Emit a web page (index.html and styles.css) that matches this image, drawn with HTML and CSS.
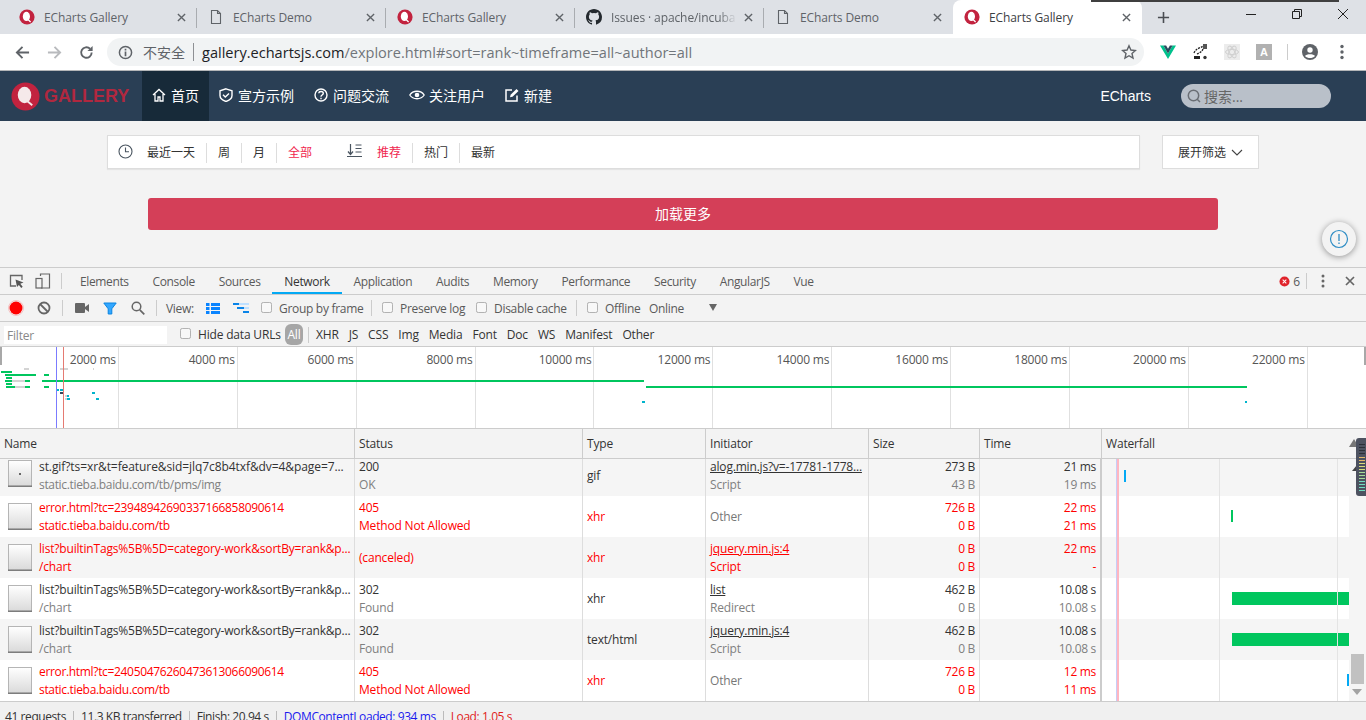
FILE: index.html
```html
<!DOCTYPE html>
<html lang="zh-CN">
<head>
<meta charset="utf-8">
<title>ECharts Gallery</title>
<link rel="stylesheet" href="styles.css">
</head>
<body>
<svg class="defs" width="0" height="0" aria-hidden="true">
  <defs>
    <symbol id="fav" viewBox="0 0 16 16"><circle cx="8" cy="8" r="7.6" fill="#c2233f"/><ellipse cx="7.4" cy="7.4" rx="3.6" ry="4.6" fill="#fff"/><path d="M9 10.5l2.6 2.4" stroke="#fff" stroke-width="1.3"/></symbol>
    <symbol id="doc" viewBox="0 0 16 16"><path d="M3.5 1.5h6l3 3v10h-9z M9.5 1.5v3h3" fill="none" stroke="#5f6368" stroke-width="1.1"/></symbol>
    <symbol id="x" viewBox="0 0 10 10"><path d="M1 1l8 8M9 1l-8 8" stroke="#5f6368" stroke-width="1.5"/></symbol>
    <symbol id="cb" viewBox="0 0 12 12"><rect x=".5" y=".5" width="11" height="11" rx="2" fill="#f8f8f8" stroke="#a9a9a9"/></symbol>
    <symbol id="thumb" viewBox="0 0 24 27"><defs><linearGradient id="tg" x1="0" y1="0" x2="0" y2="1"><stop offset="0" stop-color="#fff"/><stop offset="1" stop-color="#d9d9d9"/></linearGradient></defs><rect x=".5" y=".5" width="23" height="26" fill="url(#tg)" stroke="#b5b5b5"/><path d="M0 26.2h24" stroke="#777" stroke-width="1.4"/></symbol>
  </defs>
</svg>

<header class="tabstrip">
  <div class="tab"><svg class="fav"><use href="#fav"/></svg><span class="tab-title">ECharts Gallery</span><svg class="tab-x"><use href="#x"/></svg></div>
  <div class="tab"><svg class="fav"><use href="#doc"/></svg><span class="tab-title">ECharts Demo</span><svg class="tab-x"><use href="#x"/></svg></div>
  <div class="tab"><svg class="fav"><use href="#fav"/></svg><span class="tab-title">ECharts Gallery</span><svg class="tab-x"><use href="#x"/></svg></div>
  <div class="tab"><svg class="fav" viewBox="0 0 16 16"><path fill="#24292e" d="M8 0C3.58 0 0 3.58 0 8c0 3.54 2.29 6.53 5.47 7.59.4.07.55-.17.55-.38v-1.34c-2.23.48-2.7-1.07-2.7-1.07-.36-.93-.89-1.17-.89-1.17-.73-.5.05-.49.05-.49.8.06 1.23.83 1.23.83.71 1.22 1.87.87 2.33.66.07-.52.28-.87.5-1.07-1.77-.2-3.64-.89-3.64-3.95 0-.87.31-1.59.82-2.15-.08-.2-.36-1.02.08-2.12 0 0 .67-.21 2.2.82a7.6 7.6 0 0 1 4 0c1.53-1.04 2.2-.82 2.2-.82.44 1.1.16 1.92.08 2.12.51.56.82 1.27.82 2.15 0 3.07-1.87 3.75-3.65 3.95.29.25.54.73.54 1.48v2.2c0 .21.15.46.55.38A8 8 0 0 0 16 8c0-4.42-3.58-8-8-8z"/></svg><span class="tab-title tab-fade">Issues · apache/incuba</span><svg class="tab-x"><use href="#x"/></svg></div>
  <div class="tab tab-nosep"><svg class="fav"><use href="#doc"/></svg><span class="tab-title">ECharts Demo</span><svg class="tab-x"><use href="#x"/></svg></div>
  <div class="tab tab-active"><svg class="fav"><use href="#fav"/></svg><span class="tab-title">ECharts Gallery</span><svg class="tab-x"><use href="#x"/></svg></div>
  <svg class="newtab" viewBox="0 0 14 14"><path d="M7 1v12M1 7h12" stroke="#4a4d52" stroke-width="1.7"/></svg>
  <div class="winctl">
    <svg viewBox="0 0 12 12"><path d="M1 6.5h10" stroke="#222" stroke-width="1"/></svg>
    <svg viewBox="0 0 12 12"><path d="M1.5 3.5h7v7h-7zM3.5 3.5v-2h7v7h-2" fill="none" stroke="#222" stroke-width="1"/></svg>
    <svg viewBox="0 0 12 12"><path d="M1 1l10 10M11 1L1 11" stroke="#222" stroke-width="1"/></svg>
  </div>
  <div class="topline"></div>
</header>

<div class="toolbar">
  <svg class="tb-ic" viewBox="0 0 16 16"><path d="M15 8H2.5M8 2L2 8l6 6" fill="none" stroke="#5f6368" stroke-width="2"/></svg>
  <svg class="tb-ic" viewBox="0 0 16 16"><path d="M1 8h12.5M8 2l6 6-6 6" fill="none" stroke="#b8babd" stroke-width="2"/></svg>
  <svg class="tb-ic" viewBox="0 0 16 16"><path d="M13.5 8a5.6 5.6 0 1 1-1.7-4" fill="none" stroke="#5f6368" stroke-width="2"/><path d="M14.5 1v5.5H9z" fill="#5f6368"/></svg>
  <div class="omnibox">
    <svg class="info" viewBox="0 0 16 16"><circle cx="8" cy="8" r="6.5" fill="none" stroke="#5f6368" stroke-width="1.6"/><path d="M8 7v5M8 4v1.8" stroke="#5f6368" stroke-width="1.8"/></svg>
    <span class="insecure">不安全</span><i class="omni-sep"></i>
    <span class="url"><b>gallery.echartsjs.com</b>/explore.html#sort=rank~timeframe=all~author=all</span>
    <svg class="star" viewBox="0 0 16 16"><path d="M8 1.8l1.9 4.2 4.5.5-3.4 3 1 4.5L8 11.7 4 14l1-4.500-3.400-3 4.500-.5z" fill="none" stroke="#5f6368" stroke-width="1.4"/></svg>
  </div>
  <div class="ext">
    <svg viewBox="0 0 16 16"><path d="M0 1.5h3.4L8 9.5l4.6-8H16L8 15z" fill="#00c18c"/><path d="M3.4 1.5h2.7L8 4.8l1.9-3.3h2.7L8 9.5z" fill="#2c4a5e"/></svg>
    <svg viewBox="0 0 16 16"><path d="M2 9c2-5 7-5 9-7M5 10c2-1 5-2 6-5" fill="none" stroke="#222" stroke-width="1.3" stroke-dasharray="2 1"/><rect x="11" y="0" width="4" height="5" fill="#555"/><rect x="2" y="12" width="6" height="3" fill="#222"/><circle cx="13" cy="13.5" r="1.7" fill="#333"/></svg>
    <svg viewBox="0 0 16 16"><rect width="16" height="16" fill="#ececec"/><g fill="none" stroke="#d0d0d0"><ellipse cx="8" cy="8" rx="6.5" ry="2.6"/><ellipse cx="8" cy="8" rx="6.5" ry="2.6" transform="rotate(60 8 8)"/><ellipse cx="8" cy="8" rx="6.5" ry="2.6" transform="rotate(120 8 8)"/></g></svg>
    <span class="ext-a">A</span>
    <i class="ext-sep"></i>
    <svg viewBox="0 0 16 16"><circle cx="8" cy="8" r="8" fill="#5f6368"/><circle cx="8" cy="6" r="2.7" fill="#fff"/><path d="M3 12c1.3-2.4 8.700-2.400 10 0-2.600 2.800-7.400 2.800-10 0z" fill="#fff"/></svg>
    <svg viewBox="0 0 16 16"><circle cx="8" cy="2.500" r="1.700" fill="#5f6368"/><circle cx="8" cy="8" r="1.700" fill="#5f6368"/><circle cx="8" cy="13.500" r="1.700" fill="#5f6368"/></svg>
  </div>
</div>

<nav class="site-nav">
  <div class="logo">
    <svg class="logo-mark" viewBox="0 0 30 30"><circle cx="15" cy="15" r="14.500" fill="#c2233f"/><ellipse cx="14" cy="13.500" rx="7" ry="8.500" fill="#f5e9ea"/><path d="M17 20l5 4" stroke="#f5e9ea" stroke-width="2"/></svg>
    <span class="logo-text">GALLERY</span>
  </div>
  <a class="nav-item nav-active"><svg viewBox="0 0 14 14"><path d="M1 7l6-5.500L13 7M3 6v7h3V9h2v4h3V6" fill="none" stroke="#fff" stroke-width="1.300"/></svg>首页</a>
  <a class="nav-item"><svg viewBox="0 0 14 14"><path d="M7 .800l6 2v4.700c0 3-3 5-6 6-3-1-6-3-6-6V2.800z" fill="none" stroke="#fff" stroke-width="1.400"/><path d="M4 6.800l2.300 2.300L10 5.500" fill="none" stroke="#fff" stroke-width="1.400"/></svg>宣方示例</a>
  <a class="nav-item"><svg viewBox="0 0 14 14"><circle cx="7" cy="7" r="6" fill="none" stroke="#fff" stroke-width="1.400"/><path d="M4.800 5.300C5 2.800 9.300 2.900 9.300 5.300c0 1.700-2.300 1.700-2.300 3.400M7 9.800v1.500" fill="none" stroke="#fff" stroke-width="1.400"/></svg>问题交流</a>
  <a class="nav-item nav-eye"><svg viewBox="0 0 16 12"><path d="M.800 6C4 1 12 1 15.200 6 12 11 4 11 .800 6z" fill="none" stroke="#fff" stroke-width="1.300"/><circle cx="8" cy="6" r="2.300" fill="#fff"/></svg>关注用户</a>
  <a class="nav-item"><svg viewBox="0 0 14 14"><path d="M12 7.500V13H1V2h6" fill="none" stroke="#fff" stroke-width="1.500"/><path d="M5 9.300l.600-2.500L11.500 1 13.500 3 7.500 8.800z" fill="#fff"/></svg>新建</a>
  <a class="nav-brand">ECharts</a>
  <div class="nav-search"><svg viewBox="0 0 14 14"><circle cx="6.500" cy="6.500" r="5.200" fill="none" stroke="#6b6f75" stroke-width="1.500"/><path d="M10 10l3 3" stroke="#6b6f75" stroke-width="1.500"/></svg><span>搜索...</span></div>
</nav>

<main class="page">
  <div class="filters">
    <div class="filter-box">
      <svg class="filter-ic clock" viewBox="0 0 15 15"><circle cx="7.500" cy="7.500" r="6.500" fill="none" stroke="#4a5560" stroke-width="1.100"/><path d="M7.500 3.500v4.300h3.500" fill="none" stroke="#4a5560" stroke-width="1.100"/></svg>
      <span class="f-item f-first">最近一天</span><span class="f-item">周</span><span class="f-item">月</span><span class="f-item f-on f-last">全部</span>
      <svg class="filter-ic sort" viewBox="0 0 15 15"><path d="M3.500 1v10M1 8.500l2.500 3 2.500-3" fill="none" stroke="#4a5560" stroke-width="1.200"/><path d="M8.500 2h6M8.500 5.500h6M8.500 9h6M0 13.500h15" stroke="#4a5560" stroke-width="1"/></svg>
      <span class="f-item f-on f-first">推荐</span><span class="f-item">热门</span><span class="f-item f-last">最新</span>
    </div>
    <button class="expand">展开筛选<svg viewBox="0 0 12 7"><path d="M1 1l5 5 5-5" fill="none" stroke="#444" stroke-width="1.100"/></svg></button>
  </div>
  <button class="load-more">加载更多</button>
  <div class="help"><svg viewBox="0 0 20 20"><circle cx="10" cy="10" r="8.500" fill="none" stroke="#2d8cc4" stroke-width="1.200"/><path d="M10 5v7M10 13.500v1.500" stroke="#2d8cc4" stroke-width="1.300"/></svg></div>
</main>

<section class="devtools">
  <div class="dt-tabs">
    <svg class="dt-ic" viewBox="0 0 16 16"><path d="M7 13H1.500V2.500H13V7" fill="none" stroke="#666" stroke-width="1.300"/><path d="M6.500 6.500l8 3-3.200 1.300 2.400 3-1.500 1.200-2.300-3L8 14z" fill="#555"/></svg>
    <svg class="dt-ic" viewBox="0 0 16 16"><path d="M5.500 3V1h9v14H6" fill="none" stroke="#666" stroke-width="1.200"/><rect x="1" y="5.500" width="6" height="9.500" fill="none" stroke="#666" stroke-width="1.200"/></svg>
    <i class="dt-sep"></i>
    <span class="dt-tab">Elements</span><span class="dt-tab">Console</span><span class="dt-tab">Sources</span><span class="dt-tab dt-tab-on">Network</span><span class="dt-tab">Application</span><span class="dt-tab">Audits</span><span class="dt-tab">Memory</span><span class="dt-tab">Performance</span><span class="dt-tab">Security</span><span class="dt-tab">AngularJS</span><span class="dt-tab">Vue</span>
    <div class="dt-right">
      <svg class="err" viewBox="0 0 12 12"><circle cx="6" cy="6" r="5.500" fill="#e0232b"/><path d="M4 4l4 4M8 4L4 8" stroke="#fff" stroke-width="1.100"/></svg><span class="err-n">6</span><i class="dt-sep err-sep"></i>
      <svg class="dt-dots" viewBox="0 0 4 14"><circle cx="2" cy="2" r="1.500" fill="#666"/><circle cx="2" cy="7" r="1.500" fill="#666"/><circle cx="2" cy="12" r="1.500" fill="#666"/></svg>
      <svg class="dt-close" viewBox="0 0 10 10"><path d="M1 1l8 8M9 1l-8 8" stroke="#666" stroke-width="1.700"/></svg>
    </div>
  </div>

  <div class="dt-bar">
    <svg class="b-rec" viewBox="0 0 16 16"><circle cx="8" cy="8" r="6.500" fill="#f00"/><circle cx="8" cy="8" r="7.500" fill="none" stroke="#f00" stroke-opacity=".2"/></svg>
    <svg class="b-clear" viewBox="0 0 14 14"><circle cx="7" cy="7" r="5.500" fill="none" stroke="#666" stroke-width="1.800"/><path d="M3 3l8 8" stroke="#666" stroke-width="1.800"/></svg>
    <i class="dt-sep b-s1"></i>
    <svg class="b-cam" viewBox="0 0 14 10"><rect y="0" width="10" height="10" rx="1" fill="#666"/><path d="M10 4l4-3v8l-4-3z" fill="#666"/></svg>
    <svg class="b-fil" viewBox="0 0 14 13"><path d="M.800 1h12.400L8.800 6.800V12H5.200V6.800z" fill="#33a7ff" stroke="#0a84e0"/></svg>
    <svg class="b-sea" viewBox="0 0 14 14"><circle cx="5.500" cy="5.500" r="4.300" fill="none" stroke="#666" stroke-width="1.500"/><path d="M8.800 8.800l4.500 4.500" stroke="#666" stroke-width="1.700"/></svg>
    <i class="dt-sep b-s2"></i>
    <span class="b-view">View:</span>
    <svg class="b-v1" viewBox="0 0 14 11"><path d="M0 0h3.500v3H0zM0 4h3.500v3H0zM0 8h3.500v3H0zM5 0h9v3H5zM5 4h9v3H5zM5 8h9v3H5z" fill="#0a84ff"/></svg>
    <svg class="b-v2" viewBox="0 0 16 11"><path d="M0 0h6v2H0zM4 4h7v2H4zM10 8h6v2h-6z" fill="#0a84e8"/><path d="M6 0h10v2H6zM11 4h5v2h-5z" fill="#bfe0ff"/></svg>
    <label class="chk chk-a"><svg><use href="#cb"/></svg>Group by frame</label>
    <i class="dt-sep b-s3"></i>
    <label class="chk chk-b"><svg><use href="#cb"/></svg>Preserve log</label>
    <label class="chk chk-c"><svg><use href="#cb"/></svg>Disable cache</label>
    <i class="dt-sep b-s4"></i>
    <label class="chk chk-d"><svg><use href="#cb"/></svg>Offline</label>
    <span class="b-online">Online</span>
    <svg class="b-arrow" viewBox="0 0 8 7"><path d="M0 0h8L4 7z" fill="#666"/></svg>
  </div>

  <div class="dt-filter">
    <div class="filter-input">Filter</div>
    <label class="chk chk-h"><svg><use href="#cb"/></svg>Hide data URLs</label>
    <span class="pill">All</span>
    <i class="dt-sep p-sep"></i>
    <span class="ft ft-1">XHR</span><span class="ft">JS</span><span class="ft">CSS</span><span class="ft">Img</span><span class="ft">Media</span><span class="ft">Font</span><span class="ft">Doc</span><span class="ft">WS</span><span class="ft">Manifest</span><span class="ft">Other</span>
  </div>

  <div class="overview">
    <div class="ov-cell">2000 ms</div><div class="ov-cell">4000 ms</div><div class="ov-cell">6000 ms</div><div class="ov-cell">8000 ms</div><div class="ov-cell">10000 ms</div><div class="ov-cell">12000 ms</div><div class="ov-cell">14000 ms</div><div class="ov-cell">16000 ms</div><div class="ov-cell">18000 ms</div><div class="ov-cell">20000 ms</div><div class="ov-cell">22000 ms</div><div class="ov-cell ov-end"></div>
    <svg class="ov-chart" width="1366" height="81" viewBox="0 347 1366 81">
      <rect x="0" y="347" width="2" height="18" fill="#a8a8a8"/><rect x="1364" y="347" width="2" height="18" fill="#a8a8a8"/>
      <g fill="#d4d4d4"><rect x="24" y="368" width="5" height="2"/><rect x="60" y="368" width="8" height="2"/><rect x="93" y="368" width="1" height="2"/><rect x="27" y="374" width="9" height="2" fill="#00c65e"/><rect x="12" y="380" width="13" height="2"/><rect x="15" y="386" width="10" height="2"/><rect x="65" y="395" width="2" height="2"/><rect x="65" y="398" width="2" height="2"/></g>
      <g fill="#00c65e"><rect x="1" y="371" width="11" height="2"/><rect x="5" y="374" width="22" height="2"/><rect x="44" y="374" width="5" height="2"/><rect x="6" y="377" width="6" height="2"/><rect x="5" y="380" width="7" height="2"/><rect x="25" y="380" width="5" height="2"/><rect x="6" y="383" width="6" height="2"/><rect x="6" y="386" width="9" height="2"/><rect x="25" y="386" width="5" height="2"/><rect x="44" y="386" width="5" height="2"/><rect x="42" y="380" width="602" height="2"/><rect x="646" y="386" width="601" height="2"/></g>
      <g fill="#00b4cc"><rect x="57" y="389" width="2" height="2"/><rect x="60" y="389" width="3" height="2"/><rect x="92" y="392" width="3" height="2"/><rect x="67" y="395" width="2" height="2"/><rect x="67" y="398" width="3" height="2"/><rect x="96" y="398" width="3" height="2"/><rect x="642" y="401" width="3" height="2"/><rect x="1245" y="401" width="2" height="2"/></g>
      <rect x="60" y="392" width="3" height="2" fill="#34495e"/>
      <rect x="56" y="347" width="1" height="81" fill="#7b7bff"/><rect x="63" y="347" width="1" height="81" fill="#e57a72"/>
    </svg>
  </div>

  <div class="net-head">
    <div class="nh">Name</div><div class="nh">Status</div><div class="nh">Type</div><div class="nh">Initiator</div><div class="nh">Size</div><div class="nh">Time</div><div class="nh nh-w">Waterfall<svg class="sort-up" viewBox="0 0 10 8"><path d="M0 8L5 0l5 8z" fill="#777"/></svg></div>
  </div>

  <div class="net-body">
    <div class="row row-first">
      <div class="c c-name"><svg class="thumb"><use href="#thumb"/></svg><i class="thumb-dot"></i><div class="two"><span class="wide">st.gif?ts=xr&amp;t=feature&amp;sid=jlq7c8b4txf&amp;dv=4&amp;page=7...</span><span class="sub tight">static.tieba.baidu.com/tb/pms/img</span></div></div>
      <div class="c two"><span>200</span><span class="sub">OK</span></div>
      <div class="c mid">gif</div>
      <div class="c two"><span><u>alog.min.js?v=-17781-1778...</u></span><span class="sub">Script</span></div>
      <div class="c two num"><span>273 B</span><span class="sub">43 B</span></div>
      <div class="c two num c-time"><span>21 ms</span><span class="sub">19 ms</span></div>
      <div class="c wf"><i class="tick" style="left:22px;top:11px;background:#03a9f4"></i></div>
    </div>
    <div class="row row-odd row-err">
      <div class="c c-name"><svg class="thumb"><use href="#thumb"/></svg><div class="two"><span class="tight">error.html?tc=23948942690337166858090614</span><span class="tight">static.tieba.baidu.com/tb</span></div></div>
      <div class="c two"><span>405</span><span>Method Not Allowed</span></div>
      <div class="c mid">xhr</div>
      <div class="c mid sub-only">Other</div>
      <div class="c two num"><span>726 B</span><span>0 B</span></div>
      <div class="c two num c-time"><span>22 ms</span><span>21 ms</span></div>
      <div class="c wf"><i class="tick" style="left:129px;top:14px;background:#00c65e"></i></div>
    </div>
    <div class="row row-err">
      <div class="c c-name"><svg class="thumb"><use href="#thumb"/></svg><div class="two"><span>list?builtinTags%5B%5D=category-work&amp;sortBy=rank&amp;p...</span><span>/chart</span></div></div>
      <div class="c mid">(canceled)</div>
      <div class="c mid">xhr</div>
      <div class="c two"><span><u>jquery.min.js:4</u></span><span>Script</span></div>
      <div class="c two num"><span>0 B</span><span>0 B</span></div>
      <div class="c two num c-time"><span>22 ms</span><span>-</span></div>
      <div class="c wf"></div>
    </div>
    <div class="row row-odd">
      <div class="c c-name"><svg class="thumb"><use href="#thumb"/></svg><div class="two"><span>list?builtinTags%5B%5D=category-work&amp;sortBy=rank&amp;p...</span><span class="sub">/chart</span></div></div>
      <div class="c two"><span>302</span><span class="sub">Found</span></div>
      <div class="c mid">xhr</div>
      <div class="c two"><span><u>list</u></span><span class="sub">Redirect</span></div>
      <div class="c two num"><span>462 B</span><span class="sub">0 B</span></div>
      <div class="c two num c-time"><span>10.08 s</span><span class="sub">10.08 s</span></div>
      <div class="c wf"><i class="bar"></i></div>
    </div>
    <div class="row">
      <div class="c c-name"><svg class="thumb"><use href="#thumb"/></svg><div class="two"><span>list?builtinTags%5B%5D=category-work&amp;sortBy=rank&amp;p...</span><span class="sub">/chart</span></div></div>
      <div class="c two"><span>302</span><span class="sub">Found</span></div>
      <div class="c mid">text/html</div>
      <div class="c two"><span><u>jquery.min.js:4</u></span><span class="sub">Script</span></div>
      <div class="c two num"><span>462 B</span><span class="sub">0 B</span></div>
      <div class="c two num c-time"><span>10.08 s</span><span class="sub">10.08 s</span></div>
      <div class="c wf"><i class="bar"></i></div>
    </div>
    <div class="row row-odd row-err">
      <div class="c c-name"><svg class="thumb"><use href="#thumb"/></svg><div class="two"><span class="tight">error.html?tc=24050476260473613066090614</span><span class="tight">static.tieba.baidu.com/tb</span></div></div>
      <div class="c two"><span>405</span><span>Method Not Allowed</span></div>
      <div class="c mid">xhr</div>
      <div class="c mid sub-only">Other</div>
      <div class="c two num"><span>726 B</span><span>0 B</span></div>
      <div class="c two num c-time"><span>12 ms</span><span>11 ms</span></div>
      <div class="c wf"><i class="tick" style="left:245px;top:14px;background:#03a9f4"></i></div>
    </div>
    <div class="wf-lines"><i class="wl wl-blue"></i><i class="wl wl-red"></i><i class="wl wl-g1"></i><i class="wl wl-g2"></i></div>
    <div class="scrollbar"><svg class="sb-up" viewBox="0 0 10 6"><path d="M0 6h10L5 0z" fill="#444"/></svg><i class="thumb-bar"></i><svg class="sb-down" viewBox="0 0 10 6"><path d="M0 0h10L5 6z" fill="#a3a3a3"/></svg></div>
  </div>

  <div class="status"><span>41 requests</span><i></i><span>11.3 KB transferred</span><i></i><span>Finish: 20.94 s</span><i></i><span class="s-blue">DOMContentLoaded: 934 ms</span><i></i><span class="s-red">Load: 1.05 s</span></div>

  <svg class="meter" viewBox="0 0 10 58">
    <path d="M3 0h7v58H3a3 3 0 0 1-3-3V3a3 3 0 0 1 3-3z" fill="#4d5260"/>
    <g fill="#2c3038"><rect x="3" y="6" width="6" height="1"/><rect x="3" y="9" width="6" height="1"/><rect x="3" y="12" width="6" height="1"/><rect x="3" y="15" width="6" height="1"/></g>
    <g fill="#e3b868"><rect x="3" y="19" width="6" height="1"/><rect x="3" y="22" width="6" height="1"/></g>
    <g fill="#d8dc7c"><rect x="3" y="25" width="6" height="1"/><rect x="3" y="28" width="6" height="1"/><rect x="3" y="31" width="6" height="1"/></g>
    <g fill="#a6dc98"><rect x="3" y="34" width="6" height="1"/><rect x="3" y="37" width="6" height="1"/><rect x="3" y="40" width="6" height="1"/></g>
    <g fill="#70dcc0"><rect x="3" y="43" width="6" height="1"/><rect x="3" y="46" width="6" height="1"/><rect x="3" y="49" width="6" height="1"/><rect x="3" y="52" width="6" height="1"/></g>
  </svg>
</section>
</body>
</html>
```
FILE: styles.css
```css
* { box-sizing: border-box; }
html, body { margin: 0; height: 720px; overflow: hidden; }
body { position: relative; width: 1366px; background: #f3f3f3; font-family: "Open Sans", "Noto Sans CJK SC", sans-serif; color: #333; }
.defs { position: absolute; }
i { display: block; font-style: normal; }

/* browser tab strip */
.tabstrip { height: 34px; background: #dee1e6; display: flex; padding-left: 8px; position: relative; }
.tab { width: 189px; height: 34px; display: flex; align-items: center; padding-left: 11px; position: relative; font-size: 12px; color: #5f6368; }
.tab::after { content: ""; position: absolute; right: 0; top: 8px; height: 20px; width: 1px; background: #a9acb0; }
.tab-nosep::after { display: none; }
.tab-active { background: #fff; color: #3c4043; border-radius: 8px 8px 0 0; }
.tab-active::after { display: none; }
.fav { width: 16px; height: 16px; flex: none; }
.tab-title { margin-left: 9px; width: 126px; white-space: nowrap; letter-spacing: -.1px; }
.tab-fade { mask-image: linear-gradient(90deg, #000 85%, transparent); -webkit-mask-image: linear-gradient(90deg, #000 85%, transparent); }
.tab-x { width: 9px; height: 9px; margin-left: 7px; flex: none; }
.newtab { width: 13px; height: 13px; margin: 11px 0 0 15px; }
.winctl { position: absolute; right: 17px; top: 8px; display: flex; gap: 34px; }
.winctl svg { width: 12px; height: 12px; }
.topline { position: absolute; left: 1091px; top: 0; width: 248px; height: 2px; background: #3f3f3f; }

/* address bar */
.toolbar { height: 37px; background: #fff; border-bottom: 1px solid #b4b6b8; display: flex; align-items: center; padding-left: 15px; }
.tb-ic { width: 15px; height: 15px; margin-right: 17px; flex: none; }
.omnibox { width: 1038px; height: 28px; margin-left: -4px; border-radius: 14px; background: #f1f3f4; display: flex; align-items: center; padding-left: 11px; font-size: 14.55px; }
.info { width: 15px; height: 15px; }
.insecure { margin-left: 10px; color: #5f6368; font-size: 14px; }
.omni-sep { width: 1px; height: 18px; background: #8e9094; margin: 0 8px; }
.url { color: #70757a; flex: 1; white-space: nowrap; padding-bottom: 1px; }
.url b { font-weight: 400; color: #202124; }
.star { width: 16px; height: 16px; margin-right: 7px; }
.ext { display: flex; align-items: center; margin-left: 16px; }
.ext svg { width: 16px; height: 16px; margin-right: 16px; flex: none; }
.ext-a { width: 16px; height: 16px; background: #b1b1b1; color: #fff; font: bold 11px/16px "Liberation Sans", sans-serif; text-align: center; }
.ext-sep { width: 1px; height: 16px; background: #ccc; margin: 0 14px 0 15px; }

/* site navigation */
.site-nav { height: 50px; background: #2a3f55; display: flex; align-items: stretch; color: #fff; font-size: 14px; }
.logo { width: 142px; display: flex; align-items: center; padding-left: 11px; }
.logo-mark { width: 29px; height: 29px; flex: none; }
.logo-text { margin-left: 4px; font: bold 18px/1 "Liberation Sans", sans-serif; color: #b0283f; letter-spacing: 0; }
.nav-item { display: flex; align-items: center; padding: 0 10px 2px; gap: 5px; white-space: nowrap; }
.nav-item svg { width: 14px; height: 14px; flex: none; }
.nav-eye { gap: 4px; }
.nav-eye svg { width: 16px; height: 12px; }
.nav-active { background: #172a39; width: 67px; }
.nav-brand { margin-left: auto; align-self: center; font-family: "Liberation Sans", sans-serif; font-size: 14px; }
.nav-search { width: 150px; height: 24px; align-self: center; margin: 0 35px 0 30px; border-radius: 12px; background: #b9c0c9; color: #666; display: flex; align-items: center; padding-left: 6px; gap: 3px; }
.nav-search svg { width: 14px; height: 14px; }

/* page */
.page { height: 146px; padding-top: 14px; position: relative; }
.filters { display: flex; padding-left: 107px; }
.filter-box { width: 1033px; height: 34px; background: #fff; border: 1px solid #ddd; box-shadow: 0 1px 1px rgba(0,0,0,.06); display: flex; align-items: center; padding: 1px 0 0 10px; font-size: 12px; }
.filter-ic { width: 15px; height: 15px; flex: none; }
.clock { margin-top: -3px; }
.sort { margin: -4px 0 0 24px; }
.f-item { padding: 0 11px; border-right: 1px solid #ddd; line-height: 20px; white-space: nowrap; color: #333; }
.f-last { border-right: 0; }
.clock + .f-first { margin-left: 3px; }
.f-on { color: #f0274f; }
.sort + .f-first { margin-left: 4px; }
.expand { width: 97px; height: 34px; margin-left: 22px; background: #fff; border: 1px solid #ddd; color: #333; font: 12px "Open Sans", "Noto Sans CJK SC", sans-serif; display: flex; align-items: center; justify-content: center; gap: 5px; padding: 0; }
.expand svg { width: 12px; height: 7px; }
.load-more { display: block; width: 1070px; height: 32px; margin: 29px 0 0 148px; border: 0; border-radius: 3px; background: #d43f58; color: #fff; font: 14px "Open Sans", "Noto Sans CJK SC", sans-serif; padding: 0 0 2px; }
.help { position: absolute; left: 1322px; top: 101px; width: 34px; height: 34px; border-radius: 50%; background: #f3f3f3; box-shadow: 0 1px 6px rgba(0,0,0,.4); display: flex; align-items: center; justify-content: center; }
.help svg { width: 20px; height: 20px; }

/* devtools */
.devtools { position: relative; height: 453px; background: #f3f3f3; border-top: 1px solid #ccc; font-size: 12px; letter-spacing: -.18px; }
.dt-sep { width: 1px; height: 16px; background: #ccc; flex: none; }
.dt-tabs { height: 27px; display: flex; align-items: center; border-bottom: 1px solid #ccc; padding-left: 9px; position: relative; color: #5a5a5a; }
.dt-ic { width: 16px; height: 16px; margin-right: 10px; flex: none; }
.dt-tab { padding: 0 11.9px; height: 26px; line-height: 28px; white-space: nowrap; letter-spacing: -.35px; }
.dt-tabs .dt-sep + .dt-tab { margin-left: 6px; }
.dt-tab-on { color: #333; box-shadow: inset 0 -2px 0 #03a9f4; }
.dt-right { margin-left: auto; display: flex; align-items: center; padding-right: 11px; }
.err { width: 11px; height: 11px; margin-right: 3px; }
.err-sep { margin: 0 14px 0 6px; }
.err-n { color: #5a5a5a; }
.dt-dots { width: 4px; height: 14px; margin-right: 20px; }
.dt-close { width: 10px; height: 10px; }

.dt-bar { height: 27px; display: flex; align-items: center; border-bottom: 1px solid #ccc; padding-left: 8px; color: #5a5a5a; letter-spacing: -.3px; }
.dt-bar svg { flex: none; }
.b-rec { width: 16px; height: 16px; }
.b-clear { width: 14px; height: 14px; margin-left: 13px; }
.b-s1 { margin-left: 11px; }
.b-cam { width: 14px; height: 10px; margin-left: 12px; }
.b-fil { width: 14px; height: 13px; margin-left: 14px; }
.b-sea { width: 14px; height: 14px; margin-left: 14px; }
.b-s2 { margin-left: 11px; }
.b-view { margin-left: 9px; width: 32px; }
.b-v1 { width: 14px; height: 11px; margin-left: 8px; }
.b-v2 { width: 16px; height: 11px; margin-left: 13px; }
.chk { display: flex; align-items: center; white-space: nowrap; }
.chk svg { width: 11px; height: 11px; margin-right: 7px; flex: none; margin-top: -2px; }
.chk-a { margin-left: 12px; width: 101px; }
.b-s3 { margin-left: 9px; }
.chk-b { margin-left: 10px; width: 83px; }
.chk-c { margin-left: 11px; width: 91px; }
.b-s4 { margin-left: 9px; }
.chk-d { margin-left: 10px; width: 53px; }
.b-online { margin-left: 9px; width: 60px; }
.b-arrow { width: 8px; height: 7px; margin-top: -2px; }

.dt-filter { height: 25px; display: flex; align-items: center; border-bottom: 1px solid #ccc; padding: 1px 0 0 4px; color: #333; }
.filter-input { width: 163px; height: 18px; background: #fff; color: #888; padding-left: 3px; line-height: 19px; }
.chk-h { margin-left: 13px; width: 105px; }
.pill { width: 18px; height: 21px; border-radius: 6px; background: #a6a6a6; color: #fff; text-align: center; line-height: 21px; flex: none; }
.p-sep { margin-left: 5px; height: 16px; }
.ft { margin-left: 10px; white-space: nowrap; }
.ft-1 { margin-left: 7px; }

.overview { height: 82px; background: #fff; border-bottom: 1px solid #ccc; display: grid; grid-template-columns: repeat(11, 118.9px) 1fr; position: relative; color: #555; }
.ov-cell { border-right: 1px solid #e0e0e0; text-align: right; padding: 4px 2px 0 0; line-height: 18px; }
.ov-end { border-right: 0; }
.ov-chart { position: absolute; left: 0; top: 0; }

.net-head, .row { display: grid; grid-template-columns: 355px 228px 123px 163px 111px 122px 247px; }
.net-head { height: 30px; border-bottom: 1px solid #ccc; }
.nh { padding-left: 4px; line-height: 29px; border-right: 1px solid #ccc; color: #333; position: relative; }
.nh-w { border-right: 0; width: 264px; }
.sort-up { position: absolute; left: 247px; top: 10px; width: 10px; height: 8px; }

.net-body { height: 242px; position: relative; background: #fff; }
.row { height: 41px; background: #f5f5f5; }
.row-odd { background: #fff; }
.row-first { height: 37px; }
.row-err, .row-err .sub { color: #f00; }
.c { border-right: 1px solid #ddd; padding: 0 4px; overflow: hidden; white-space: nowrap; position: relative; display: flex; flex-direction: column; justify-content: center; line-height: 18px; }
.two { display: flex; flex-direction: column; justify-content: center; }
.two span { display: block; }
.tight { letter-spacing: -.33px; }
.wide { letter-spacing: -.08px; }
.row-first .c { justify-content: flex-end; padding-bottom: 2px; overflow: visible; }
.row-first .two span:first-child { line-height: 14px; margin-bottom: 2px; }
.row-first .mid { justify-content: center; padding-bottom: 4px; }
.c-name { flex-direction: row; align-items: center; justify-content: flex-start; padding: 0 0 0 8px; }
.row-first .c-name { justify-content: flex-start; align-items: flex-end; padding-bottom: 2px; }
.thumb { width: 24px; height: 27px; flex: none; margin-right: 7px; }
.row-first .thumb { margin-bottom: 7px; }
.thumb-dot { position: absolute; left: 19px; top: 14px; width: 2px; height: 2px; background: #666; }
.sub { color: #808080; }
.row .sub-only { color: #777; }
.num { text-align: right; align-items: flex-end; letter-spacing: -.3px; }
.c-time { border-right: 2px solid #ccc; }
.wf { border-right: 0; padding: 0; display: block; }
.row-first .wf { padding: 0; }
.tick { position: absolute; width: 2px; height: 12px; }
.bar { position: absolute; left: 130px; right: 0; top: 14px; height: 13px; background: #00c65e; }
.wf-lines { position: absolute; left: 1102px; top: 0; width: 247px; height: 242px; pointer-events: none; }
.wl { position: absolute; top: 0; bottom: 0; width: 1px; }
.wl-blue { left: 14px; background: #c6cdf7; }
.wl-red { left: 15px; width: 2px; background: #ffb6c1; }
.wl-g1 { left: 117px; background: #e4e4e4; }
.wl-g2 { left: 235px; background: #e4e4e4; }
.scrollbar { position: absolute; left: 1349px; top: 0; width: 17px; height: 242px; background: #f5f5f5; }
.thumb-bar { position: absolute; left: 2px; top: 195px; width: 13px; height: 30px; background: #c1c1c1; }
.scrollbar svg { position: absolute; left: 3px; width: 10px; height: 6px; }
.sb-up { top: 6px; }
.sb-down { top: 230px; }

.status { height: 26px; background: #f0f0f0; border-top: 1px solid #ccc; display: flex; align-items: center; padding: 3px 0 0 5px; color: #333; white-space: nowrap; letter-spacing: -.42px; }
.status i { width: 1px; height: 10px; background: #bbb; margin: 0 7px; }
.s-blue { color: #1a1aee; }
.s-red { color: #e0231b; }

.meter { position: absolute; left: 1356px; top: 170px; width: 10px; height: 58px; }
```
